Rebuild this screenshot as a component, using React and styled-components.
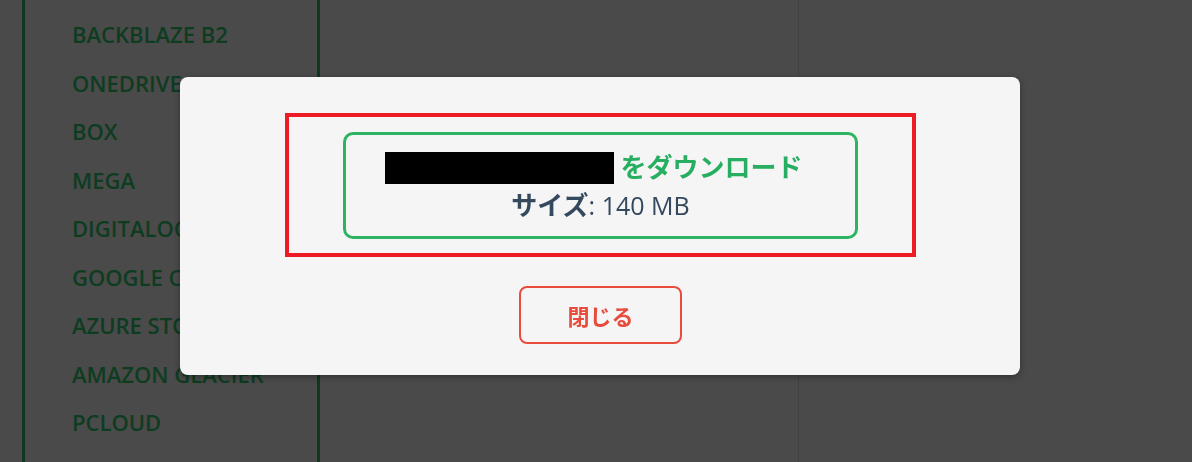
import React from "react";
import styled, { createGlobalStyle } from "styled-components";

const GlobalStyle = createGlobalStyle`
  html, body {
    margin: 0;
    padding: 0;
    height: 100%;
    overflow: hidden;
    background: #4a4a4a;
    font-family: "Open Sans", "Noto Sans CJK JP", sans-serif;
  }
`;

// Page behind the overlay
const Page = styled.div`
  display: flex;
  height: 462px;
  padding-left: 22px;
`;

const Sidebar = styled.ul`
  list-style: none;
  margin: 0;
  padding: 10px 0 0 47px;
  width: 245px;
  border-left: 3px solid #0d3a1e;
  border-right: 3px solid #0d3a1e;
`;

const SideItem = styled.li`
  height: 48.5px;
  line-height: 48.5px;
  font-size: 22px;
  font-weight: 600;
  color: #0e3c20;
  white-space: nowrap;
`;

const Content = styled.div`
  width: 478px;
  border-right: 1px solid #414141;
`;

// Dialog over the page
const Overlay = styled.div`
  position: fixed;
  inset: 0;
  display: flex;
  align-items: flex-start;
  padding: 77px 0 0 180px;
`;

const Modal = styled.div`
  width: 840px;
  box-sizing: border-box;
  padding: 36px 104px 31px 105px;
  background: #f5f5f5;
  border-radius: 8px;
  box-shadow: 0 2px 6px rgba(0, 0, 0, 0.35);
  display: flex;
  flex-direction: column;
  align-items: center;
`;

const Highlight = styled.div`
  width: 100%;
  box-sizing: border-box;
  border: 4px solid #ed1c24;
  padding: 15px 0 14px;
  display: flex;
  justify-content: center;
`;

const InfoBox = styled.div`
  width: 515px;
  height: 107px;
  box-sizing: border-box;
  border: 3px solid #2db462;
  border-radius: 10px;
  display: flex;
  flex-direction: column;
  align-items: center;
  padding-top: 17px;
`;

const Title = styled.div`
  display: flex;
  align-items: center;
  gap: 6px;
  height: 32px;
  margin-left: -13px;
`;

const Redacted = styled.span`
  display: inline-block;
  width: 229px;
  height: 32px;
  background: #000;
`;

const TitleText = styled.span`
  font-family: "Noto Sans CJK JP", sans-serif;
  font-size: 26px;
  font-weight: 700;
  color: #27ae60;
  line-height: 1;
  margin-top: -5px;
`;

const SizeLine = styled.div`
  margin-top: 6px;
  font-size: 25px;
  color: #34495e;
  line-height: 1.1;
`;

const SizeLabel = styled.span`
  font-family: "Noto Sans CJK JP", sans-serif;
  font-size: 26px;
  font-weight: 700;
`;

const CloseButton = styled.button`
  margin-top: 29px;
  width: 163px;
  height: 58px;
  background: transparent;
  border: 2px solid #e74c3c;
  border-radius: 8px;
  color: #e74c3c;
  font-family: "Noto Sans CJK JP", sans-serif;
  font-size: 22px;
  font-weight: 700;
  cursor: pointer;
`;

const services = [
  "BACKBLAZE B2",
  "ONEDRIVE",
  "BOX",
  "MEGA",
  "DIGITALOCEAN",
  "GOOGLE CLOUD",
  "AZURE STORAGE",
  "AMAZON GLACIER",
  "PCLOUD",
];

export default function App() {
  return (
    <>
      <GlobalStyle />
      <Page>
        <Sidebar>
          {services.map((s) => (
            <SideItem key={s}>{s}</SideItem>
          ))}
        </Sidebar>
        <Content />
      </Page>
      <Overlay>
        <Modal>
          <Highlight>
            <InfoBox>
              <Title>
                <Redacted />
                <TitleText>をダウンロード</TitleText>
              </Title>
              <SizeLine>
                <SizeLabel>サイズ</SizeLabel>: 140 MB
              </SizeLine>
            </InfoBox>
          </Highlight>
          <CloseButton>閉じる</CloseButton>
        </Modal>
      </Overlay>
    </>
  );
}
